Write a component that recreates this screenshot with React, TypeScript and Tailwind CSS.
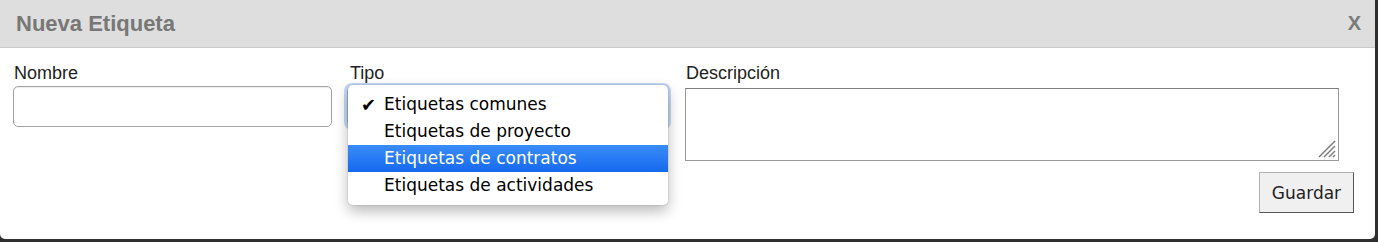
import React from 'react'

const tipos = [
  { label: 'Etiquetas comunes', checked: true },
  { label: 'Etiquetas de proyecto' },
  { label: 'Etiquetas de contratos', active: true },
  { label: 'Etiquetas de actividades' },
]

function TipoSelect() {
  return (
    <div className="relative h-[41px] w-[321px]">
      {/* native select behind the open menu */}
      <div className="h-[41px] w-[321px] rounded-[5px] border border-[#9fb9d8] bg-white shadow-[0_0_0_3px_rgba(120,170,230,0.45)]" />
      {/* open menu */}
      <div className="absolute left-[1px] top-[-1px] w-[320px] rounded-[5px] bg-white py-[6px] shadow-[0_6px_14px_rgba(0,0,0,0.28),0_0_0_1px_rgba(0,0,0,0.06)] font-['DejaVu_Sans',sans-serif] text-[17px]">
        {tipos.map((t) => (
          <div
            key={t.label}
            className={
              t.active
                ? 'flex h-[27px] items-center bg-gradient-to-b from-[#3a8cf8] to-[#1469ee] text-white'
                : 'flex h-[27px] items-center text-black'
            }
          >
            <span className="w-[36px] pl-[13px] text-[18px] leading-none">{t.checked ? '✔' : ''}</span>
            <span className="leading-none">{t.label}</span>
          </div>
        ))}
      </div>
    </div>
  )
}

export default function App() {
  return (
    <div className="h-[242px] w-[1378px] bg-[#2e2e2e]">
      <div className="flex h-[239px] w-[1375px] flex-col overflow-hidden rounded-b-[5px] bg-white font-['Liberation_Sans',Arial,sans-serif]">
        <div className="flex h-[48px] shrink-0 items-center justify-between border-b border-[#c9c9c9] bg-[#dedede] pl-[16px] pr-[14px]">
          <span className="pt-[1px] text-[22px] font-bold leading-none text-[#777777]">Nueva Etiqueta</span>
          <span className="pb-[2px] text-[20px] font-bold leading-none text-[#7a7a7a]">X</span>
        </div>
        <div className="flex pl-[13px] pr-[21px] pt-[16px] text-[18px] leading-[18px] text-[#222222]">
          <div className="flex w-[319px] flex-col">
            <label className="mb-[4px] pl-[1px]">Nombre</label>
            <div className="h-[41px] w-[319px] rounded-[5px] border border-[#a3a3a3] bg-white shadow-[inset_0_1px_1px_rgba(0,0,0,0.08)]" />
          </div>
          <div className="ml-[15px] flex w-[321px] flex-col">
            <label className="mb-[4px] pl-[3px]">Tipo</label>
            <TipoSelect />
          </div>
          <div className="ml-[17px] flex flex-1 flex-col">
            <label className="mb-[6px] pl-[1px]">Descripción</label>
            <div className="relative h-[73px] w-[654px] border border-[#9a9a9a] border-t-[#808080] bg-white">
              <svg className="absolute bottom-[2px] right-[2px]" width="20" height="20" viewBox="0 0 20 20">
                <g stroke="#7a7a7a" strokeWidth="1.4">
                  <line x1="19" y1="3" x2="3" y2="19" />
                  <line x1="19" y1="8" x2="8" y2="19" />
                  <line x1="19" y1="13" x2="13" y2="19" />
                  <line x1="19" y1="17" x2="17" y2="19" />
                </g>
              </svg>
            </div>
            <button className="mt-[11px] h-[41px] w-[95px] self-end border border-[#b0b0b0] border-b-[#555555] border-r-[#555555] bg-[#f0f0f0] font-['DejaVu_Sans',sans-serif] text-[17px] text-[#222222]">
              Guardar
            </button>
          </div>
        </div>
      </div>
    </div>
  )
}
